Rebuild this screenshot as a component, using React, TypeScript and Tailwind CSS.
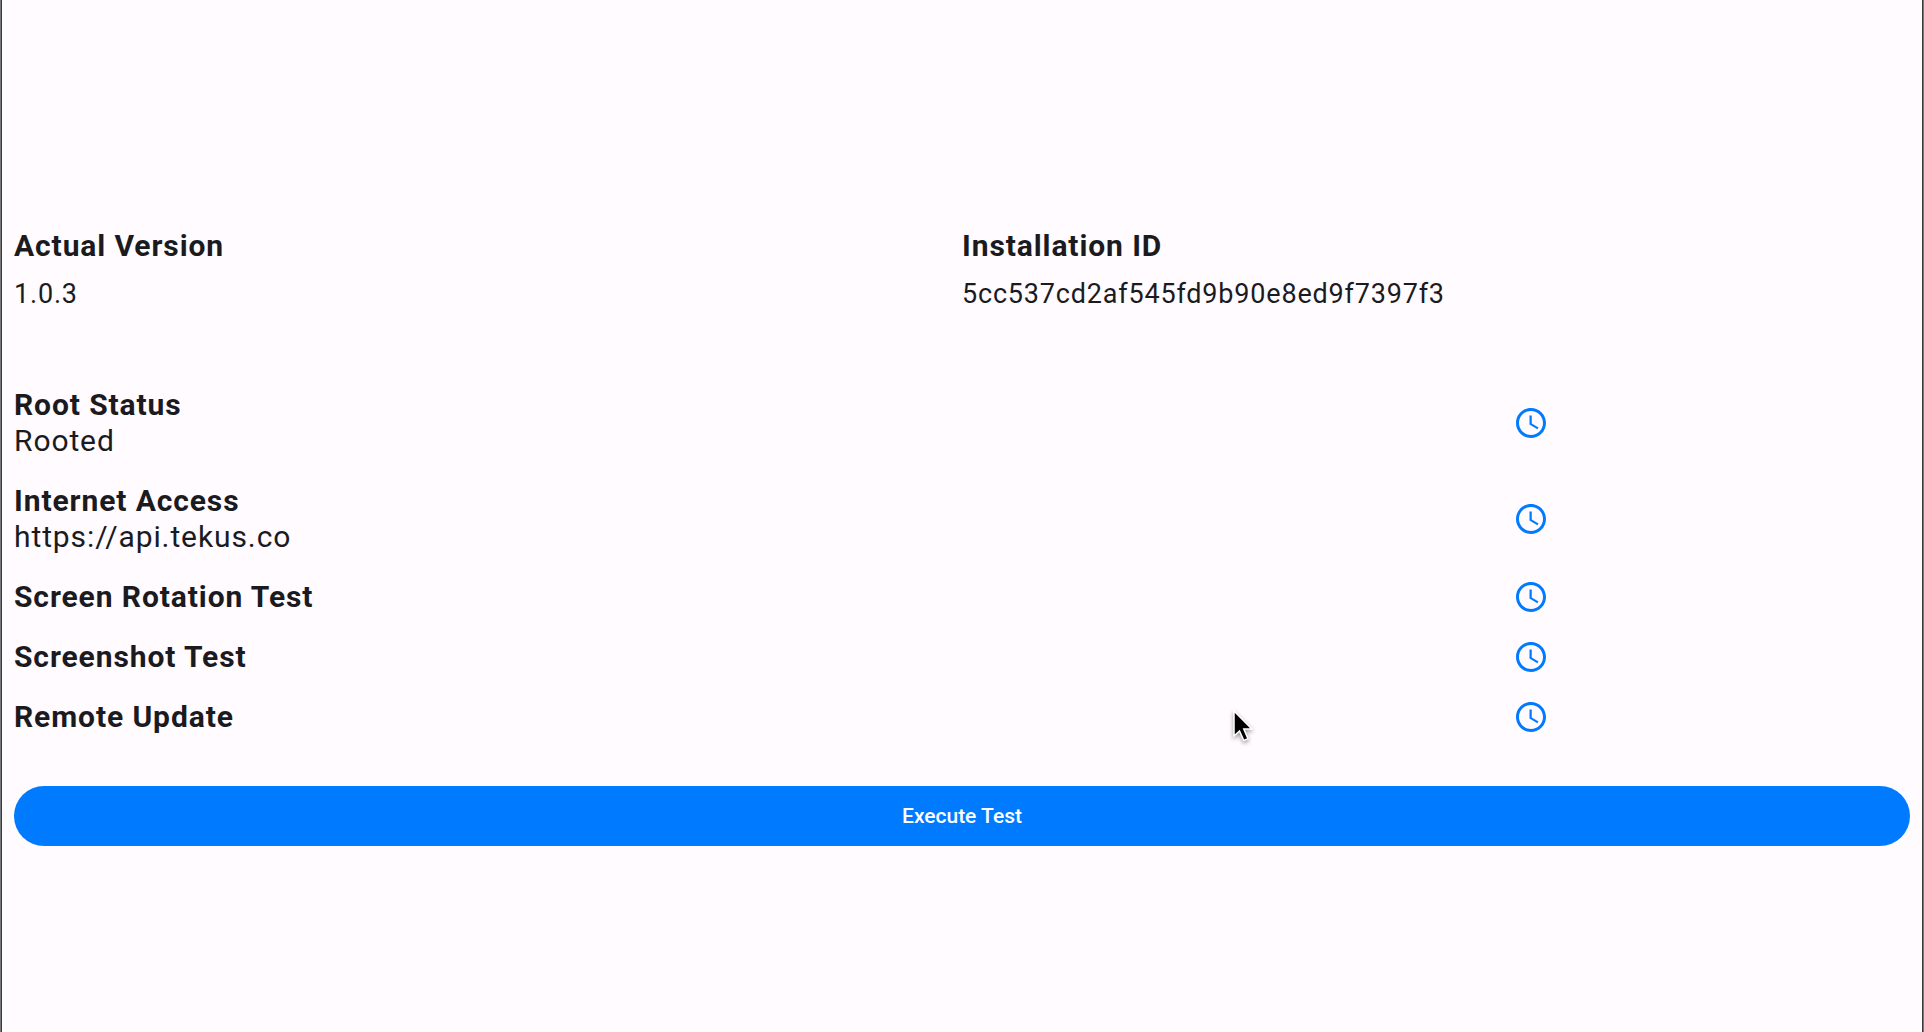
type Check = {
  label: string;
  detail?: string;
};

const checks: Check[] = [
  { label: "Root Status", detail: "Rooted" },
  { label: "Internet Access", detail: "https://api.tekus.co" },
  { label: "Screen Rotation Test" },
  { label: "Screenshot Test" },
  { label: "Remote Update" },
];

function PendingIcon() {
  return (
    <svg viewBox="0 0 24 24" className="size-9 fill-[#007aff]" role="img" aria-label="Pending">
      <path d="M11.99 2C6.47 2 2 6.48 2 12s4.47 10 9.99 10C17.52 22 22 17.52 22 12S17.52 2 11.99 2zM12 20c-4.42 0-8-3.58-8-8s3.58-8 8-8 8 3.58 8 8-3.58 8-8 8zm.5-13H11v6l5.25 3.15.75-1.23-4.5-2.67z" />
    </svg>
  );
}

function InfoField({ label, value }: { label: string; value: string }) {
  return (
    <div>
      <dt className="text-[30px] leading-9 font-bold tracking-[0.03em]">{label}</dt>
      <dd className="mt-3 text-[27px] leading-9 tracking-[0.03em]">{value}</dd>
    </div>
  );
}

function CheckRow({ label, detail }: Check) {
  return (
    <li className="grid grid-cols-5 items-center py-3 text-[30px] leading-9 tracking-[0.03em]">
      <div className="col-span-3">
        <h2 className="font-bold">{label}</h2>
        {detail && <p>{detail}</p>}
      </div>
      <div className="col-span-2 flex justify-center">
        <PendingIcon />
      </div>
    </li>
  );
}

function Pointer() {
  return (
    <svg
      viewBox="0 0 22 34"
      className="pointer-events-none absolute top-[708px] left-[1231px] h-[34px] w-[22px] overflow-visible drop-shadow-[0_2px_2px_rgba(0,0,0,0.4)]"
      aria-hidden="true"
    >
      <path
        d="M2 3v25l5.500-5 4.300 9.500 4.200-1.800-4.200-9.700h8z"
        fill="#000"
        stroke="#fff"
        strokeWidth="1.500"
      />
    </svg>
  );
}

export default function App() {
  return (
    <div className="relative border-x border-[#77787b] font-[Roboto,sans-serif] text-[#1b1b1f]">
      <main className="flex min-h-screen flex-col justify-center border-x border-[#3a3b3e] bg-[#fffbff] px-3 pt-[41px]">
        <dl className="grid grid-cols-2">
          <InfoField label="Actual Version" value="1.0.3" />
          <InfoField label="Installation ID" value="5cc537cd2af545fd9b90e8ed9f7397f3" />
        </dl>
        <ul className="mt-[63px]">
          {checks.map((check) => (
            <CheckRow key={check.label} {...check} />
          ))}
        </ul>
        <button
          type="button"
          className="mt-[39px] h-[60px] w-full rounded-full bg-[#007aff] pt-0.5 text-[21px] font-medium text-white"
        >
          Execute Test
        </button>
      </main>
      <Pointer />
    </div>
  );
}
